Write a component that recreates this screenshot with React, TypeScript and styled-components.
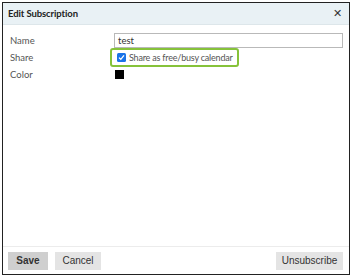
import React from "react";
import styled, { createGlobalStyle } from "styled-components";

const Global = createGlobalStyle`
  html, body { margin: 0; padding: 0; background: #fff; }
  body { width: 352px; height: 277px; overflow: hidden; }
`;

const Frame = styled.div`
  box-sizing: border-box;
  margin: 2px;
  width: 348px;
  height: 273px;
  border: 1.5px solid #222;
  display: flex;
  flex-direction: column;
  background: #fff;
`;

const Header = styled.div`
  height: 21px;
  background: #e9f1f5;
  border-bottom: 1px solid #dde6ea;
  display: flex;
  align-items: center;
  justify-content: space-between;
  padding: 0 7px 0 5px;
  font-family: Lato, "Open Sans", sans-serif;
  font-weight: 700;
  font-size: 9.5px;
  letter-spacing: -0.1px;
  color: #222;
`;

const Close = styled.span`
  font-family: "DejaVu Sans", sans-serif;
  font-weight: 400;
  font-size: 11px;
  color: #333;
  line-height: 1;
`;

const Body = styled.div`
  flex: 1;
  padding: 8px 6px 0 7px;
  display: grid;
  grid-template-columns: 104px 1fr;
  grid-auto-rows: 15px;
  row-gap: 2px;
  align-items: center;
  font-family: Lato, "Open Sans", sans-serif;
  font-size: 9.5px;
  color: #555;
`;

const Label = styled.div`
  line-height: 15px;
`;

const Input = styled.div`
  box-sizing: border-box;
  height: 15px;
  border: 1px solid #b9b9b9;
  padding: 0 3px;
  line-height: 13px;
  color: #333;
`;

const Highlight = styled.div`
  box-sizing: border-box;
  justify-self: start;
  margin: -2px 0 -2px -4px;
  display: flex;
  align-items: center;
  gap: 3px;
  padding: 0 4px 0 5px;
  border: 2px solid #86c23a;
  border-radius: 3px;
  height: 19px;
  color: #555;
  font-size: 9px;
  letter-spacing: -0.2px;
`;

const Check = styled.span`
  width: 9px;
  height: 9px;
  background: #1a73e8;
  border-radius: 1.5px;
  display: inline-flex;
  align-items: center;
  justify-content: center;
`;

const Swatch = styled.div`
  width: 9px;
  height: 9px;
  background: #000;
  margin-left: 1px;
`;

const Footer = styled.div`
  border-top: 1px solid #ececec;
  height: 27px;
  display: flex;
  align-items: center;
  padding: 0 6px 0 5px;
  gap: 7px;
`;

const Button = styled.button<{ $primary?: boolean }>`
  height: 18px;
  border: none;
  padding: 0;
  width: ${(p) => (p.$primary ? "40px" : "46px")};
  background: ${(p) => (p.$primary ? "#cfcfcf" : "#e4e4e4")};
  font-family: "Liberation Sans", Arial, sans-serif;
  font-size: 10px;
  font-weight: ${(p) => (p.$primary ? 700 : 400)};
  color: #333;
`;

const Spacer = styled.div`
  flex: 1;
`;

const WideButton = styled(Button)`
  width: 67px;
`;

export default function App() {
  return (
    <>
      <Global />
      <Frame>
        <Header>
          <span>Edit Subscription</span>
          <Close>✕</Close>
        </Header>
        <Body>
          <Label>Name</Label>
          <Input>test</Input>
          <Label>Share</Label>
          <Highlight>
            <Check>
              <svg width="7" height="7" viewBox="0 0 7 7">
                <path d="M1 3.6 L2.8 5.3 L6 1.4" stroke="#fff" strokeWidth="1.3" fill="none" />
              </svg>
            </Check>
            <span>Share as free/busy calendar</span>
          </Highlight>
          <Label>Color</Label>
          <Swatch />
        </Body>
        <Footer>
          <Button $primary>Save</Button>
          <Button>Cancel</Button>
          <Spacer />
          <WideButton>Unsubscribe</WideButton>
        </Footer>
      </Frame>
    </>
  );
}
